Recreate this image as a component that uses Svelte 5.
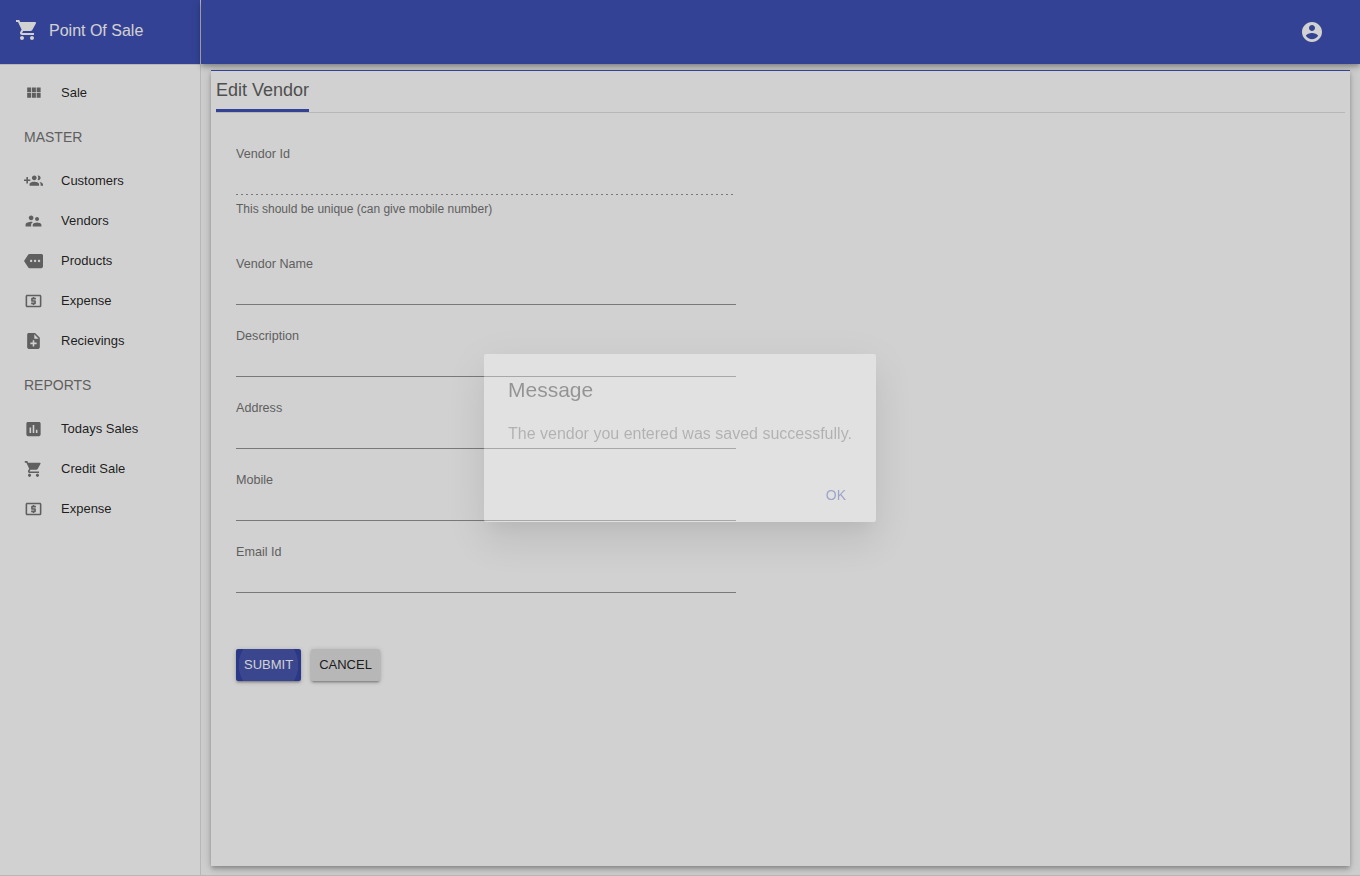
<script>
  const icons = {
    cart: 'M7 18c-1.1 0-1.99.9-1.99 2S5.9 22 7 22s2-.9 2-2-.9-2-2-2zM1 2v2h2l3.6 7.59-1.35 2.45c-.16.28-.25.61-.25.96 0 1.1.9 2 2 2h12v-2H7.42c-.14 0-.25-.11-.25-.25l.03-.12.9-1.63h7.45c.75 0 1.41-.41 1.75-1.03l3.58-6.49c.08-.14.12-.31.12-.48 0-.55-.45-1-1-1H5.21l-.94-2H1zm16 16c-1.1 0-1.99.9-1.99 2s.89 2 1.99 2 2-.9 2-2-.9-2-2-2z',
    modules: 'M4 11h5V5H4v6zm0 7h5v-6H4v6zm6 0h5v-6h-5v6zm6 0h5v-6h-5v6zm-6-7h5V5h-5v6zm6-6v6h5V5h-5z',
    groupAdd: 'M8 10H5V7H3v3H0v2h3v3h2v-3h3v-2zm10 1c1.66 0 2.99-1.34 2.99-3S19.66 5 18 5c-.32 0-.63.05-.91.14.57.81.9 1.79.9 2.86s-.34 2.04-.9 2.86c.28.09.59.14.91.14zm-5 0c1.66 0 2.99-1.34 2.99-3S14.66 5 13 5c-1.66 0-3 1.34-3 3s1.34 3 3 3zm6.62 2.16c.83.73 1.38 1.66 1.38 2.84v2h3v-2c0-1.54-2.37-2.49-4.38-2.84zM13 13c-2 0-6 1-6 3v2h12v-2c0-2-4-3-6-3z',
    people: 'M16.5 12c1.38 0 2.49-1.12 2.49-2.5S17.88 7 16.5 7C15.12 7 14 8.12 14 9.5s1.12 2.5 2.5 2.5zM9 11c1.66 0 2.99-1.34 2.99-3S10.66 5 9 5C7.34 5 6 6.34 6 8s1.34 3 3 3zm7.5 3c-1.83 0-5.5.92-5.5 2.75V19h11v-2.25c0-1.83-3.67-2.75-5.5-2.75zM9 13c-2.33 0-7 1.17-7 3.5V19h7v-2.25c0-.85.33-2.34 2.37-3.47C10.5 13.1 9.66 13 9 13z',
    more: 'M22 3H7c-.69 0-1.23.35-1.59.88L0 12l5.41 8.11c.36.53.97.89 1.66.89H22c1.1 0 2-.9 2-2V5c0-1.1-.9-2-2-2zM9 13.5c-.83 0-1.5-.67-1.5-1.5s.67-1.5 1.5-1.5 1.5.67 1.5 1.5-.67 1.5-1.5 1.5zm5 0c-.83 0-1.5-.67-1.5-1.5s.67-1.5 1.5-1.5 1.5.67 1.5 1.5-.67 1.5-1.5 1.5zm5 0c-.83 0-1.5-.67-1.5-1.5s.67-1.5 1.5-1.5 1.5.67 1.5 1.5-.67 1.5-1.5 1.5z',
    atm: 'M11 17h2v-1h1c.55 0 1-.45 1-1v-3c0-.55-.45-1-1-1h-3v-1h4V8h-2V7h-2v1h-1c-.55 0-1 .45-1 1v3c0 .55.45 1 1 1h3v1H9v2h2v1zm9-13H4c-1.11 0-1.99.89-1.99 2L2 18c0 1.11.89 2 2 2h16c1.11 0 2-.89 2-2V6c0-1.11-.89-2-2-2zm0 14H4V6h16v12z',
    noteAdd: 'M14 2H6c-1.1 0-1.99.9-1.99 2L4 20c0 1.1.89 2 1.99 2H18c1.1 0 2-.9 2-2V8l-6-6zm2 14h-3v3h-2v-3H8v-2h3v-3h2v3h3v2zm-3-7V3.5L18.5 9H13z',
    chart: 'M19 3H5c-1.1 0-2 .9-2 2v14c0 1.1.9 2 2 2h14c1.1 0 2-.9 2-2V5c0-1.1-.9-2-2-2zM9 17H7v-7h2v7zm4 0h-2V7h2v10zm4 0h-2v-4h2v4z',
    account: 'M12 2C6.48 2 2 6.48 2 12s4.48 10 10 10 10-4.48 10-10S17.52 2 12 2zm0 3c1.66 0 3 1.34 3 3s-1.34 3-3 3-3-1.34-3-3 1.34-3 3-3zm0 14.2c-2.5 0-4.71-1.28-6-3.22.03-1.99 4-3.08 6-3.08 1.99 0 5.97 1.09 6 3.08-1.29 1.94-3.5 3.22-6 3.22z'
  };
  const groups = [
    { title: '', items: [['modules', 'Sale']] },
    {
      title: 'MASTER',
      items: [['groupAdd', 'Customers'], ['people', 'Vendors'], ['more', 'Products'], ['atm', 'Expense'], ['noteAdd', 'Recievings']]
    },
    { title: 'REPORTS', items: [['chart', 'Todays Sales'], ['cart', 'Credit Sale'], ['atm', 'Expense']] }
  ];
  const fields = [
    { label: 'Vendor Id', disabled: true, help: 'This should be unique (can give mobile number)' },
    { label: 'Vendor Name' },
    { label: 'Description' },
    { label: 'Address' },
    { label: 'Mobile' },
    { label: 'Email Id' }
  ];
</script>

{#snippet icon(name)}
  <svg viewBox="0 0 24 24" aria-hidden="true"><path d={icons[name]} /></svg>
{/snippet}

<div class="app">
  <aside>
    <div class="brand">{@render icon('cart')}<span>Point Of Sale</span></div>
    <nav>
      {#each groups as group}
        {#if group.title}<h2>{group.title}</h2>{/if}
        {#each group.items as [name, label]}
          <div class="item">{@render icon(name)}<span>{label}</span></div>
        {/each}
      {/each}
    </nav>
  </aside>
  <div class="content">
    <header>{@render icon('account')}</header>
    <main>
      <section class="card">
        <div class="tabs"><h1>Edit Vendor</h1></div>
        <form>
          {#each fields as field}
            <div class="field" class:disabled={field.disabled}>
              <div class="label">{field.label}</div>
              <div class="line"></div>
              {#if field.help}<p>{field.help}</p>{/if}
            </div>
          {/each}
          <div class="actions">
            <button type="button" class="submit">SUBMIT</button>
            <button type="button">CANCEL</button>
          </div>
        </form>
      </section>
    </main>
  </div>
</div>
<div class="backdrop"></div>
<div class="modal">
  <div class="dialog" role="dialog" aria-label="Message">
    <h3>Message</h3>
    <p>The vendor you entered was saved successfully.</p>
    <div class="ok"><span>OK</span></div>
  </div>
</div>

<style>
  :global(body) { overflow: hidden; }
  * { box-sizing: border-box; }
  h1, h2, h3, p { margin: 0; font-weight: 400; }
  svg { fill: currentColor; flex: none; display: block; }
  .app, .modal { font-family: "Liberation Sans", Arial, sans-serif; }
  .app {
    height: 876px;
    display: flex;
    background: #fafafa;
    border-bottom: 1px solid #e0e0e0;
    color: rgba(0, 0, 0, 0.87);
  }
  aside { width: 201px; flex: none; background: #fff; border-right: 1px solid #e0e0e0; }
  .brand {
    height: 65px;
    display: flex;
    align-items: center;
    gap: 10px;
    padding: 0 0 3px 15px;
    background: #3f51b5;
    border-bottom: 1px solid #e0e0e0;
    color: #fff;
    font-size: 16px;
  }
  .brand svg { width: 24px; height: 24px; margin-bottom: 2px; }
  nav { padding-top: 8px; }
  .item {
    height: 40px;
    display: flex;
    align-items: center;
    gap: 18px;
    padding-left: 24px;
    font-size: 13px;
  }
  .item svg { width: 19px; height: 24px; color: #757575; }
  .item span { padding-bottom: 2px; }
  h2 { height: 48px; padding-left: 24px; font-size: 14px; line-height: 49px; color: #757575; }
  .content { flex: 1; display: flex; flex-direction: column; }
  header {
    height: 64px;
    flex: none;
    display: flex;
    align-items: center;
    justify-content: flex-end;
    padding-right: 36px;
    background: #3f51b5;
    color: #fff;
    box-shadow: 0 2px 4px -1px rgba(0, 0, 0, 0.2), 0 4px 5px rgba(0, 0, 0, 0.14), 0 1px 10px rgba(0, 0, 0, 0.12);
  }
  header svg { width: 24px; height: 24px; }
  main { flex: 1; display: flex; padding: 6px 10px 9px; }
  .card {
    flex: 1;
    padding: 0 5px;
    background: #fff;
    border-top: 1px solid #3f51b5;
    box-shadow: 0 2px 4px -1px rgba(0, 0, 0, 0.2), 0 4px 5px rgba(0, 0, 0, 0.14), 0 1px 10px rgba(0, 0, 0, 0.12);
  }
  .tabs { height: 42px; display: flex; border-bottom: 1px solid #e0e0e0; }
  h1 { height: 41px; font-size: 18px; line-height: 38px; color: #616161; border-bottom: 3px solid #3f51b5; }
  form { width: 520px; padding: 33px 0 0 20px; }
  .field { height: 72px; }
  .field.disabled { height: 110px; }
  .label { height: 48px; font-size: 16.8px; line-height: 22px; color: #757575; transform: scale(0.75); transform-origin: left top; }
  .line { height: 1px; background: #949494; }
  .disabled .line { background: linear-gradient(to right, #949494 33%, transparent 0) left / 5px 1px repeat-x; }
  .field p { padding-top: 7px; font-size: 12px; line-height: 14px; color: #757575; }
  .actions { display: flex; gap: 10px; padding-top: 33px; }
  button {
    height: 32px;
    padding: 0 8px 2px;
    border: 0;
    border-radius: 2px;
    font: 13px "Liberation Sans", Arial, sans-serif;
    color: rgba(0, 0, 0, 0.87);
    background: #e0e0e0;
    box-shadow: 0 1px 5px rgba(0, 0, 0, 0.2), 0 2px 2px rgba(0, 0, 0, 0.14), 0 3px 1px -2px rgba(0, 0, 0, 0.12);
  }
  .submit {
    color: #fff;
    background: radial-gradient(circle, rgba(255, 255, 255, 0.09) 29.5px, transparent 30px) #3545a6;
  }
  .backdrop { position: fixed; inset: 0; background: rgba(0, 0, 0, 0.18); }
  .modal { position: fixed; inset: 0; display: flex; align-items: center; justify-content: center; opacity: 0.35; }
  .dialog {
    width: 392px;
    height: 168px;
    border-radius: 2px;
    background: #fff;
    box-shadow: 0 11px 15px -7px rgba(0, 0, 0, 0.2), 0 24px 38px 3px rgba(0, 0, 0, 0.14), 0 9px 46px 8px rgba(0, 0, 0, 0.12);
  }
  h3 { padding: 24px 24px 20px; font-size: 21px; line-height: 24px; color: rgba(0, 0, 0, 0.87); }
  .dialog p { padding: 0 24px; font-size: 16px; line-height: 24px; color: rgba(0, 0, 0, 0.54); white-space: nowrap; }
  .ok { display: flex; justify-content: flex-end; padding: 41px 30px 0; font-size: 14px; line-height: 16px; color: #3f51b5; }
</style>
